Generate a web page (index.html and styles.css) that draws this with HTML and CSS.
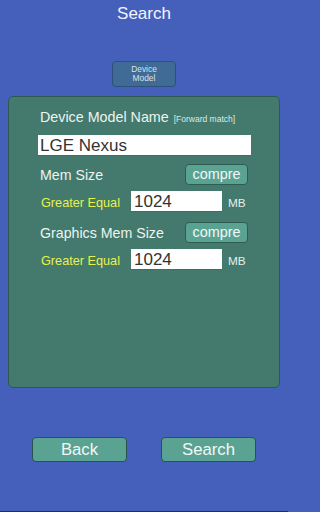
FILE: index.html
```html
<!DOCTYPE html>
<html>
<head>
<meta charset="utf-8">
<link rel="stylesheet" href="styles.css">
</head>
<body>
<div class="title">Search</div>
<div class="tab-wrap">
  <div class="tab">Device<br>Model</div>
</div>
<div class="panel">
  <div class="name-row">Device Model Name <span class="hint">[Forward match]</span></div>
  <div class="text-field">LGE Nexus</div>
  <div class="cond-row">
    <div class="label">Mem Size</div>
    <div class="small-btn">compre</div>
  </div>
  <div class="value-row">
    <div class="op">Greater Equal</div>
    <div class="num-field">1024</div>
    <div class="unit">MB</div>
  </div>
  <div class="cond-row">
    <div class="label">Graphics Mem Size</div>
    <div class="small-btn">compre</div>
  </div>
  <div class="value-row">
    <div class="op">Greater Equal</div>
    <div class="num-field">1024</div>
    <div class="unit">MB</div>
  </div>
</div>
<div class="actions">
  <div class="big-btn">Back</div>
  <div class="big-btn">Search</div>
</div>
<div class="bottom-line"></div>
</body>
</html>
```

FILE: styles.css
```css
html, body {
  margin: 0;
  padding: 0;
}
body {
  width: 288px;
  height: 512px;
  background: #4560bb;
  font-family: "Liberation Sans", Arial, sans-serif;
  display: flex;
  flex-direction: column;
  overflow: hidden;
}
.title {
  padding-top: 4px;
  font-size: 17px;
  line-height: 20px;
  height: 20px;
  text-align: center;
  color: #f2f5fb;
}
.tab-wrap {
  display: flex;
  justify-content: center;
  margin-top: 37px;
}
.tab {
  box-sizing: border-box;
  width: 64px;
  height: 26px;
  background: #3f6b96;
  border: 1px solid #2e5179;
  border-radius: 4px;
  color: #d9e2ec;
  font-size: 8.4px;
  line-height: 9.4px;
  text-align: center;
  display: flex;
  align-items: center;
  justify-content: center;
}
.panel {
  box-sizing: border-box;
  margin: 9px 0 0 8px;
  width: 272px;
  height: 292px;
  background: #437a6d;
  border: 1px solid #2d5a4f;
  border-radius: 5px;
  padding: 12px 0 0 29px;
  color: #edf4f1;
}
.name-row {
  margin-left: 2px;
  font-size: 14.3px;
  line-height: 17px;
  white-space: nowrap;
}
.hint {
  font-size: 8.5px;
  margin-left: 1px;
  color: #dde9e5;
}
.text-field {
  box-sizing: border-box;
  margin-top: 7px;
  width: 213px;
  height: 21px;
  background: #ffffff;
  border-bottom: 1px solid #3d6e63;
  padding-left: 2px;
  font-size: 17px;
  line-height: 21px;
  color: #333333;
}
.cond-row {
  display: flex;
  align-items: center;
  margin-top: 8px;
  height: 21px;
}
.label {
  margin-left: 2px;
  width: 145px;
  font-size: 14.2px;
  line-height: 21px;
  padding-top: 1px;
}
.small-btn {
  box-sizing: border-box;
  width: 63px;
  height: 21px;
  background: #5aa393;
  border: 1px solid #2f5c50;
  border-radius: 4px;
  font-size: 14.4px;
  line-height: 19px;
  text-align: center;
  color: #f2f8f6;
}
.value-row {
  display: flex;
  align-items: baseline;
  margin-top: 6px;
}
.op {
  margin-left: 3px;
  width: 90px;
  font-size: 12.7px;
  line-height: 21px;
  color: #e8f24a;
  white-space: nowrap;
}
.num-field {
  box-sizing: border-box;
  width: 91px;
  height: 21px;
  background: #ffffff;
  border-bottom: 1px solid #3d6e63;
  padding-left: 3px;
  font-size: 17px;
  line-height: 21px;
  color: #333333;
}
.unit {
  margin-left: 6px;
  font-size: 11.8px;
  color: #e6efec;
}
.actions {
  display: flex;
  justify-content: center;
  gap: 34px;
  margin-top: 49px;
}
.big-btn {
  box-sizing: border-box;
  width: 95px;
  height: 25px;
  background: #5aa393;
  border: 1px solid #2a5349;
  border-radius: 4px;
  font-size: 16.7px;
  line-height: 23px;
  text-align: center;
  color: #f2f8f6;
}
.bottom-line {
  margin-top: auto;
  height: 1px;
  background: #2b2f3a;
}
```
